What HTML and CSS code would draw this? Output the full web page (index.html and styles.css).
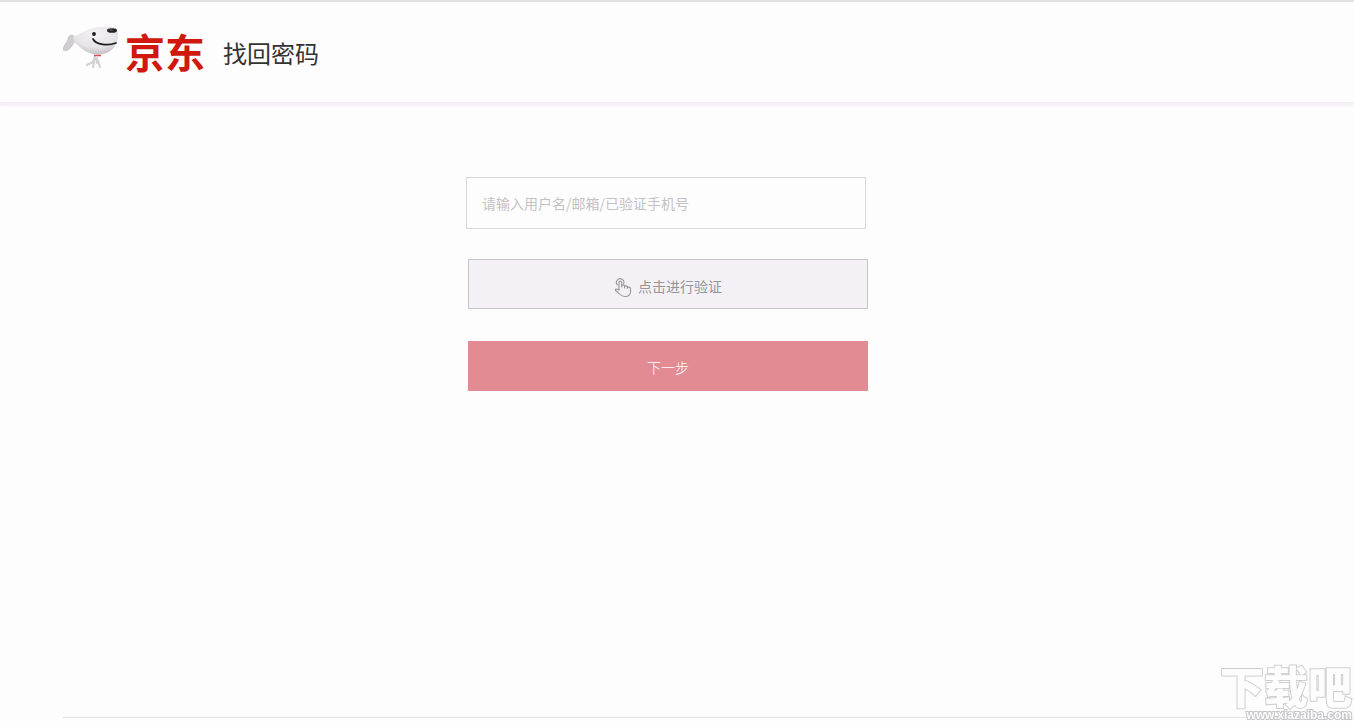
FILE: index.html
```html
<!DOCTYPE html>
<html lang="zh-CN">
<head>
<meta charset="utf-8">
<title>找回密码</title>
<link rel="stylesheet" href="styles.css">
</head>
<body>
<header class="header">
  <div class="container brand">
    <a class="logo" href="#" aria-label="京东">
      <svg class="mascot" viewBox="0 0 57 46" width="57" height="46" aria-hidden="true">
        <defs>
          <radialGradient id="fur" cx="0.5" cy="0.25" r="0.8">
            <stop offset="0" stop-color="#f4f2f4"/>
            <stop offset="0.6" stop-color="#e6e4e7"/>
            <stop offset="1" stop-color="#bdb9be"/>
          </radialGradient>
        </defs>
        <path d="M11 10C8 8 6 9 5 13C4 17 1 18 0 24C2 26 6 24 8 21C10 19 10 17 12 15Z" fill="#cfcdd0" stroke="#bcb9bd" stroke-width=".6"/>
        <path d="M32 30L30 36L24 39M32 32L30 41M34 32L37 41M34 32L34 37" fill="none" stroke="#d5d2d6" stroke-width="2.200" stroke-linecap="round"/>
        <path d="M10 11C17 8 26 1 37 1C42 1 51 0 54 3C56 7 55 15 52 20C47 27 39 30 30 28C21 26 16 20 11 16Z" fill="url(#fur)"/>
        <path d="M31 29.500H38" stroke="#dc4c55" stroke-width="1.500"/>
        <circle cx="31" cy="8" r="1.900" fill="#1d1c1e"/>
        <path d="M30 13C33 19 45 20 53 17" fill="none" stroke="#1d1c1e" stroke-width="1.700" stroke-linecap="round"/>
        <ellipse cx="49" cy="4.500" rx="5" ry="2.300" fill="#242225"/>
        <ellipse cx="48" cy="4" rx="2" ry=".6" fill="#777"/>
      </svg>
      <span class="logo-name">京东</span>
    </a>
    <h1 class="title">找回密码</h1>
  </div>
</header>
<main class="main">
  <form class="form">
    <input class="account" type="text" aria-label="用户名/邮箱/已验证手机号" placeholder="请输入用户名/邮箱/已验证手机号">
    <button class="button verify" type="button">
      <svg class="hand" viewBox="0 0 18 20" width="18" height="20" fill="none" stroke="#99979a" stroke-width="1.100" stroke-linecap="round" stroke-linejoin="round" aria-hidden="true">
        <path d="M3.500 7A3.700 3.700 0 1 1 9.500 6"/>
        <path d="M5 12V4.500Q5 3 6.300 3T7.700 4.500V9V7.500Q9 6.300 10.500 7.500V10V8.500Q12 7.300 13.300 8.500V10.500V9.500Q15.200 8.500 16.500 10V14Q16 18.500 11.500 18.500Q8 18.700 5.500 16L1.500 12.500Q1 10.700 3 11Z"/>
      </svg>
      <span>点击进行验证</span>
    </button>
    <button class="button next" type="submit">下一步</button>
  </form>
</main>
<footer class="footer">
  <div class="container footer-line"></div>
</footer>
<div class="watermark">
  <span class="mark-name">下载吧</span>
  <span class="mark-url">www.xiazaiba.com</span>
</div>
</body>
</html>
```
FILE: styles.css
```css
* {
  box-sizing: border-box;
}

body {
  display: flex;
  flex-direction: column;
  min-height: 100vh;
  margin: 0;
  background: #fefdfe;
  font-family: "Noto Sans CJK SC", sans-serif;
  font-size: 14px;
}

.header,
.main,
.footer {
  padding-right: 18px;
}

.container {
  width: 100%;
  max-width: 1210px;
  margin: 0 auto;
}

.header {
  height: 102px;
  border-top: 2px solid #e2e1e3;
  box-shadow: 0 3px 3px 1px #f3eff5;
}

.brand {
  display: flex;
  gap: 18px;
  padding-top: 22px;
}

.logo {
  display: flex;
  gap: 5px;
  color: #d0180f;
  text-decoration: none;
}

.mascot {
  margin-top: 2px;
}

.logo-name {
  padding-top: 7px;
  font-size: 40px;
  font-weight: 700;
  line-height: 40px;
}

.title {
  margin: 0;
  padding-top: 11px;
  color: #333;
  font-size: 24px;
  font-weight: 400;
  line-height: 36px;
}

.main {
  flex: 1;
  padding-top: 75px;
}

.form {
  display: flex;
  flex-direction: column;
  width: 100%;
  max-width: 404px;
  margin: 0 auto;
}

.account {
  width: calc(100% - 4px);
  height: 52px;
  padding: 0 15px;
  border: 1px solid #d9d8da;
  background: #fefdfe;
  color: #666;
  font: inherit;
}

.account::placeholder {
  color: #c3c1c4;
  opacity: 1;
}

.button {
  display: flex;
  align-items: center;
  justify-content: center;
  width: calc(100% - 4px);
  height: 50px;
  margin-left: 2px;
  padding: 4px 0 0;
  font: inherit;
}

.verify {
  gap: 6px;
  margin-top: 30px;
  border: 1px solid #c9c7ca;
  background: #f3f1f5;
  color: #969497;
}

.hand {
  margin-top: 4px;
}

.next {
  margin-top: 32px;
  padding-top: 2px;
  border: 0;
  background: #e38b93;
  color: #fff;
  font-weight: 300;
}

.footer {
  padding-bottom: 3px;
}

.footer-line {
  border-top: 1px solid #e3e2e4;
}

.watermark {
  position: fixed;
  right: 2px;
  bottom: 0;
  display: flex;
  flex-direction: column;
  align-items: flex-end;
  color: #fefdfe;
  paint-order: stroke fill;
}

.mark-name {
  font-size: 44px;
  font-weight: 900;
  line-height: 48px;
  -webkit-text-stroke: 2px #cfced0;
}

.mark-url {
  font-family: "Liberation Sans", sans-serif;
  font-size: 12px;
  font-weight: 700;
  line-height: 12px;
  -webkit-text-stroke: 2px #c6c5c7;
}
```
